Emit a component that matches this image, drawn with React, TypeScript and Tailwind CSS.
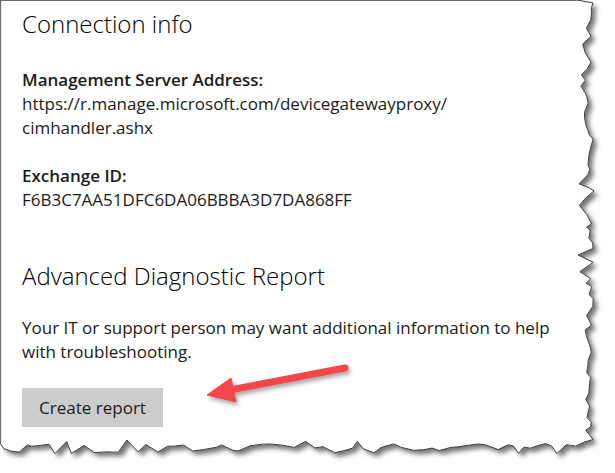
import React from 'react'

// torn paper edge, generated once from a fixed seed so it is stable
function tornPath() {
  let seed = 7
  const rnd = () => {
    seed = (seed * 16807) % 2147483647
    return seed / 2147483647
  }
  const pts: [number, number][] = [[577, 0]]
  let y = 0
  while (y < 440) {
    y += 3 + rnd() * 7
    pts.push([584 + rnd() * 10 - (rnd() > 0.8 ? 6 : 0), Math.min(y, 442)])
  }
  let x = 585
  while (x > 8) {
    x -= 4 + rnd() * 9
    pts.push([Math.max(x, 4), 444 + rnd() * 10 - (rnd() > 0.75 ? 5 : 0)])
  }
  pts.push([0.5, 444])
  return pts.map((p, i) => `${i ? 'L' : 'M'}${p[0].toFixed(1)} ${p[1].toFixed(1)}`).join(' ')
}

const edge = tornPath()

export default function App() {
  return (
    <div className="relative h-[473px] w-[615px] overflow-hidden bg-white">
      <svg className="absolute inset-0" width="615" height="473">
        <defs>
          <filter id="paper" x="-5%" y="-5%" width="115%" height="115%">
            <feDropShadow dx="4" dy="4" stdDeviation="2.5" floodColor="#000" floodOpacity="0.55" />
          </filter>
        </defs>
        <path d={`${edge} L0.5 0.5 L577 0.5 Z`} fill="#fff" filter="url(#paper)" />
        <path d={edge} fill="none" stroke="#3a3a3a" strokeWidth="1" />
        <path d="M0.5 444 L0.5 0.5 L577 0.5" fill="none" stroke="#6b6b6b" strokeWidth="1.2" />
      </svg>

      <div className="relative pl-[22px] pt-2 text-[#1a1a1a]" style={{ fontFamily: '"Segoe UI", "Open Sans", sans-serif' }}>
        <h1 className="text-[24px] font-light leading-[32px] text-black">Connection info</h1>

        <div className="mt-7 text-[17px] leading-[24px]">
          <div className="font-semibold">Management Server Address:</div>
          <div>https://r.manage.microsoft.com/devicegatewayproxy/</div>
          <div>cimhandler.ashx</div>
        </div>

        <div className="mt-6 text-[17px] leading-[24px]">
          <div className="font-semibold">Exchange ID:</div>
          <div>F6B3C7AA51DFC6DA06BBBA3D7DA868FF</div>
        </div>

        <h2 className="mt-12 text-[24px] font-light leading-[32px] text-black">Advanced Diagnostic Report</h2>

        <p className="mt-6 text-[17px] leading-[24px]">
          Your IT or support person may want additional information to help
          <br />
          with troubleshooting.
        </p>

        <button className="mt-6 h-[39px] w-[141px] bg-[#cccccc] text-[17px] text-[#1a1a1a]">Create report</button>
      </div>

      <svg className="absolute inset-0 pointer-events-none" width="615" height="473">
        <defs>
          <filter id="arrowShadow" x="-20%" y="-50%" width="140%" height="200%">
            <feDropShadow dx="2" dy="3" stdDeviation="2" floodColor="#000" floodOpacity="0.35" />
          </filter>
        </defs>
        <g filter="url(#arrowShadow)" fill="#f2464c" stroke="#f2464c">
          <line x1="345" y1="368" x2="230" y2="390" strokeWidth="7" strokeLinecap="round" />
          <polygon points="207,395 231,378 236,402" strokeWidth="1" strokeLinejoin="round" />
        </g>
      </svg>
    </div>
  )
}
